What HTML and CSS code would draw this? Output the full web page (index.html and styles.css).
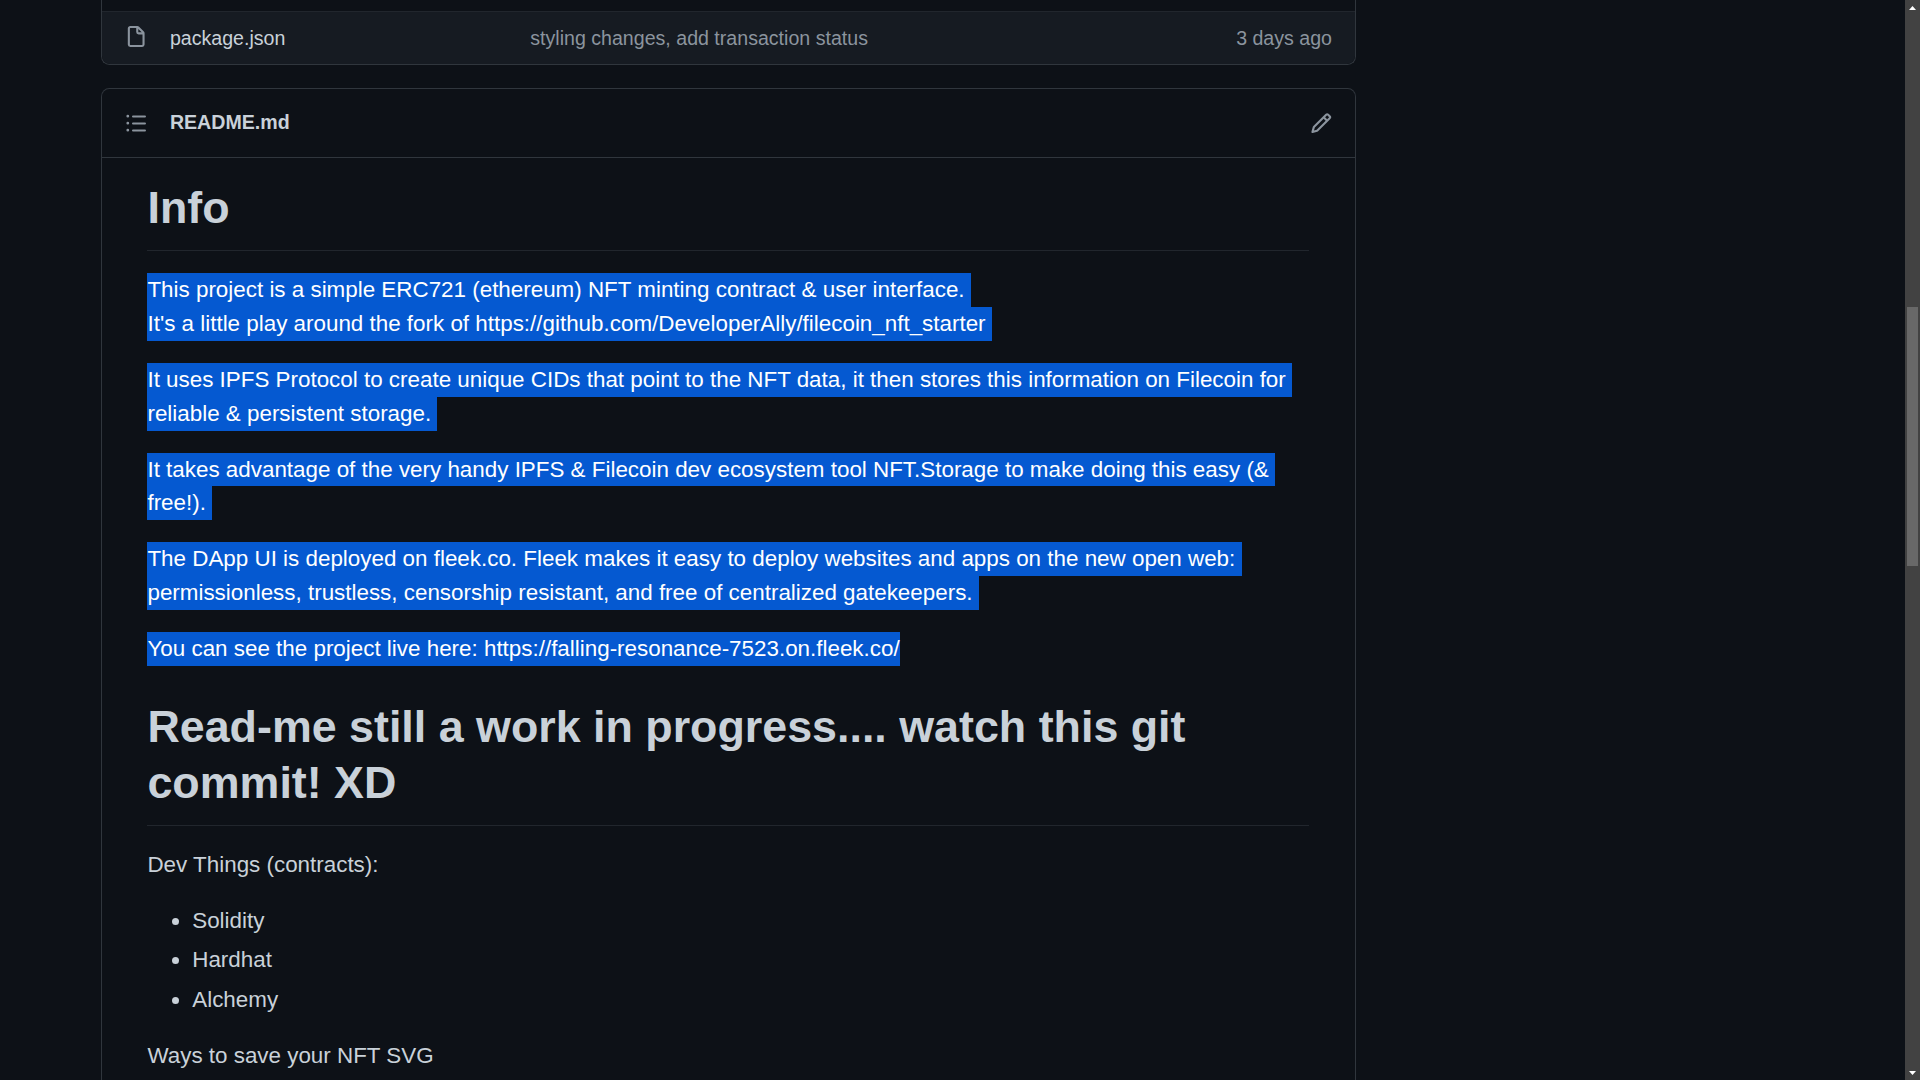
FILE: index.html
```html
<!DOCTYPE html>
<html>
<head>
    <meta charset="UTF-8">
    <title>README.md</title>
    <link rel="stylesheet" href="styles.css">
</head>
<body>
<main class="page">
    <section class="files">
        <div class="files-cut"></div>
        <div class="file-row">
            <svg class="icon icon-file" viewBox="0 0 16 16"><path d="M2 1.75C2 .784 2.784 0 3.75 0h5.086c.464 0 .909.184 1.237.513l3.414 3.414c.329.328.513.773.513 1.237v8.086A1.75 1.75 0 0 1 12.25 15h-8.5A1.75 1.75 0 0 1 2 13.25Zm1.75-.25a.25.25 0 0 0-.25.25v11.5c0 .138.112.25.25.25h8.5a.25.25 0 0 0 .25-.25V6h-2.75A1.75 1.75 0 0 1 8 4.25V1.5Zm5.75.56v2.19c0 .138.112.25.25.25h2.19Z"/></svg>
            <span class="file-name">package.json</span>
            <span class="file-commit">styling changes, add transaction status</span>
            <span class="file-age">3 days ago</span>
        </div>
    </section>

    <section class="readme">
        <header class="readme-head">
            <svg class="icon" viewBox="0 0 16 16"><path d="M5.75 2.5h8.5a.75.75 0 0 1 0 1.5h-8.5a.75.75 0 0 1 0-1.5Zm0 5h8.5a.75.75 0 0 1 0 1.5h-8.5a.75.75 0 0 1 0-1.5Zm0 5h8.5a.75.75 0 0 1 0 1.5h-8.5a.75.75 0 0 1 0-1.5ZM2 14a1 1 0 1 1 0-2 1 1 0 0 1 0 2Zm1-6a1 1 0 1 1-2 0 1 1 0 0 1 2 0ZM2 4a1 1 0 1 1 0-2 1 1 0 0 1 0 2Z"/></svg>
            <strong class="readme-title">README.md</strong>
            <svg class="icon icon-edit" viewBox="0 0 16 16"><path d="M11.013 1.427a1.75 1.75 0 0 1 2.474 0l1.086 1.086a1.75 1.75 0 0 1 0 2.474l-8.61 8.61c-.21.21-.47.364-.756.445l-3.251.93a.75.75 0 0 1-.927-.928l.929-3.25c.081-.286.235-.547.445-.758l8.61-8.61Zm.176 4.823L9.75 4.81l-6.286 6.287a.253.253 0 0 0-.064.108l-.558 1.953 1.953-.558a.253.253 0 0 0 .108-.064Zm1.238-3.763a.25.25 0 0 0-.354 0L10.811 3.75l1.439 1.44 1.263-1.263a.25.25 0 0 0 0-.354Z"/></svg>
        </header>

        <article class="markdown">
            <h1>Info</h1>
            <p>
                <span class="sel">This project is a simple ERC721 (ethereum) NFT minting contract &amp; user interface. </span>
                <span class="sel">It's a little play around the fork of https://github.com/DeveloperAlly/filecoin_nft_starter </span>
            </p>
            <p>
                <span class="sel">It uses IPFS Protocol to create unique CIDs that point to the NFT data, it then stores this information on Filecoin for </span>
                <span class="sel">reliable &amp; persistent storage. </span>
            </p>
            <p>
                <span class="sel">It takes advantage of the very handy IPFS &amp; Filecoin dev ecosystem tool NFT.Storage to make doing this easy (&amp; </span>
                <span class="sel">free!). </span>
            </p>
            <p>
                <span class="sel">The DApp UI is deployed on fleek.co. Fleek makes it easy to deploy websites and apps on the new open web: </span>
                <span class="sel">permissionless, trustless, censorship resistant, and free of centralized gatekeepers. </span>
            </p>
            <p>
                <span class="sel">You can see the project live here: https://falling-resonance-7523.on.fleek.co/</span>
            </p>
            <h1>Read-me still a work in progress.... watch this git commit! XD</h1>
            <p>Dev Things (contracts):</p>
            <ul>
                <li>Solidity</li>
                <li>Hardhat</li>
                <li>Alchemy</li>
            </ul>
            <p>Ways to save your NFT SVG</p>
        </article>
    </section>
</main>

<aside class="scrollbar">
    <div class="scroll-btn">
        <svg width="7" height="4" viewBox="0 0 7 4"><path d="M3.5 0 7 4H0Z"/></svg>
    </div>
    <div class="scroll-track">
        <div class="scroll-thumb"></div>
    </div>
    <div class="scroll-btn">
        <svg width="7" height="4" viewBox="0 0 7 4"><path d="M0 0h7L3.5 4Z"/></svg>
    </div>
</aside>
</body>
</html>
```

FILE: styles.css
```css
html,
body {
    height: 100%;
}

body {
    display: flex;
    margin: 0;
    overflow: hidden;
    background-color: #0d1117;
    color: #c9d1d9;
    font-family: "Liberation Sans", Arial, sans-serif;
}

.page {
    flex: 1;
    display: flex;
    flex-direction: column;
    min-width: 0;
    padding-left: 101px;
}

/* File list, scrolled so only its last row shows */
.files,
.readme {
    box-sizing: border-box;
    width: 1255px;
    border: 1px solid #30363d;
}

.files {
    flex: none;
    border-top: none;
    border-radius: 0 0 8.4px 8.4px;
}

.files-cut {
    height: 11px;
    border-bottom: 1px solid #21262d;
}

.file-row {
    display: flex;
    align-items: center;
    height: 52px;
    padding: 0 23px 0 22.5px;
    background-color: #161b22;
    border-radius: 0 0 8.4px 8.4px;
    font-size: 19.6px;
}

.icon {
    flex: none;
    width: 22.4px;
    height: 22.4px;
    fill: #8b949e;
}

.icon-file {
    margin-bottom: 1px;
}

.file-name {
    width: 360.4px;
    margin-left: 23px;
}

.file-commit,
.file-age {
    color: #8b949e;
}

.file-age {
    margin-left: auto;
}

/* Readme box */
.readme {
    flex: 1;
    margin-top: 23px;
    border-bottom: none;
    border-radius: 8.4px 8.4px 0 0;
}

.readme-head {
    display: flex;
    align-items: center;
    height: 68px;
    padding: 0 23px 0 22.5px;
    border-bottom: 1px solid #30363d;
}

.readme-title {
    margin-left: 23px;
    padding-bottom: 2px;
    font-size: 19.6px;
}

.icon-edit {
    margin-left: auto;
}

.markdown {
    padding: 21.4px 45.55px 0 45.45px;
    font-size: 22.4px;
    line-height: 33.6px;
}

.markdown h1 {
    margin: 32.8px 0 22px;
    padding-bottom: 15px;
    border-bottom: 1px solid #21262d;
    font-size: 44.8px;
    font-weight: bold;
    line-height: 56px;
}

.markdown h1:first-child {
    margin-top: 0;
}

.markdown p {
    margin: 0 0 22.4px;
}

.markdown ul {
    margin: 22.7px 0 22.8px;
    padding-left: 44.8px;
}

.markdown li + li {
    margin-top: 5.3px;
}

.markdown li:last-child {
    margin-top: 5.9px;
}

/* Selected text, one block per visual line */
.sel {
    display: block;
    width: fit-content;
    background-color: #0559d1;
    color: #ffffff;
    white-space: pre;
}

.sel:last-child {
    margin-bottom: -0.4px;
    padding-bottom: 0.4px;
}

/* Browser scrollbar */
.scrollbar {
    flex: none;
    display: flex;
    flex-direction: column;
    width: 15px;
    background-color: #424242;
}

.scroll-btn {
    flex: none;
    display: flex;
    align-items: center;
    justify-content: center;
    height: 15px;
    fill: #ffffff;
}

.scroll-track {
    flex: 1;
    padding: 292px 2px 0;
}

.scroll-thumb {
    height: 259px;
    background-color: #686868;
}
```
